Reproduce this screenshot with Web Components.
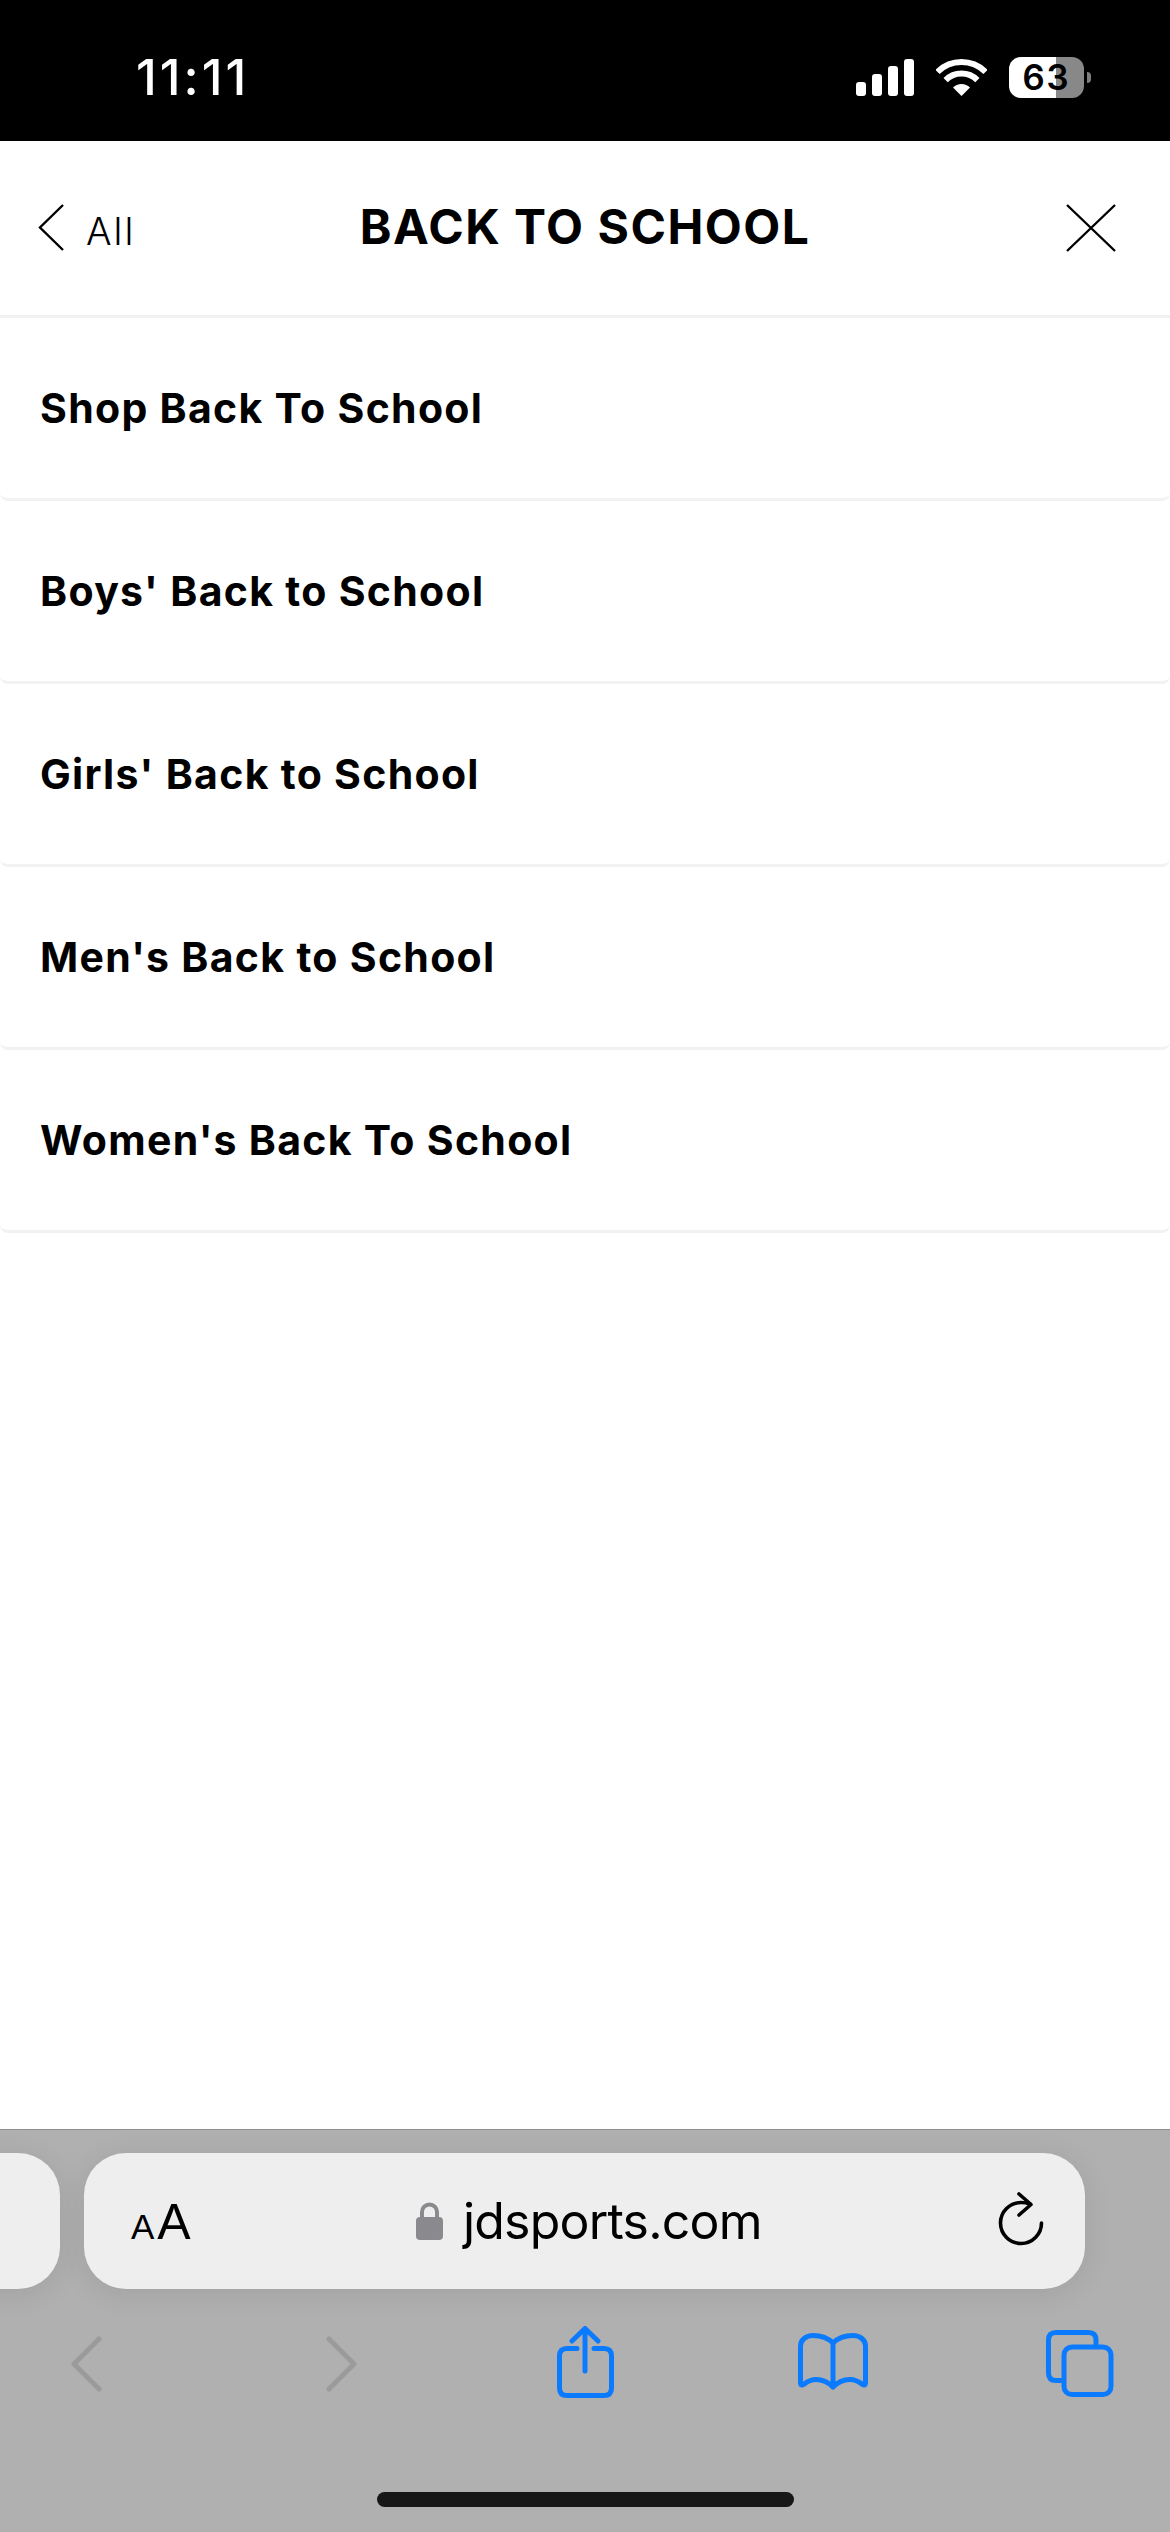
<!DOCTYPE html>
<html lang="en">
<head>
<meta charset="utf-8">
<title>Back to School</title>
<style>
  html, body { margin: 0; padding: 0; background: #fff; }
  body { width: 1170px; height: 2532px; overflow: hidden; font-family: Inter, "Liberation Sans", sans-serif; }
</style>
</head>
<body>
<phone-shell>
  <status-bar slot="top" time="11:11" level="63"></status-bar>
  <menu-header slot="top" heading="BACK TO SCHOOL" back="All"></menu-header>
  <menu-row>Shop Back To School</menu-row>
  <menu-row>Boys' Back to School</menu-row>
  <menu-row>Girls' Back to School</menu-row>
  <menu-row>Men's Back to School</menu-row>
  <menu-row>Women's Back To School</menu-row>
  <browser-bar slot="bottom" url="jdsports.com"></browser-bar>
</phone-shell>

<script>
/**
 * Outer frame, top bars / scrolling list / bottom bar
 */
class phoneshell extends HTMLElement {
  constructor () {
    super()
    this.attachShadow({ mode: 'open' })
    this.shadowRoot.innerHTML = `
    <style>
      :host { display: flex; flex-direction: column; width: 1170px; height: 2532px; background: #fff; }
      main { flex: 1; display: flex; flex-direction: column; }
    </style>
    <slot name="top"></slot>
    <main><slot></slot></main>
    <slot name="bottom"></slot>`
  }
}

class statusbar extends HTMLElement {
  constructor () {
    super()
    this.attachShadow({ mode: 'open' })
    this.shadowRoot.innerHTML = `
    <style>
      :host { display: flex; align-items: flex-start; height: 141px; background: #000; color: #fff; box-sizing: border-box; padding: 57px 0 0 136px; }
      #time { font: 500 50px/41px Inter, sans-serif; width: 720px; letter-spacing: 3px; }
      #signal { display: block; width: 58px; height: 37px; margin: 2px 22px 0 0; }
      #wifi { display: block; width: 51px; height: 37px; margin: 2px 22px 0 0; }
      #battery {
        width: 75px; height: 41px; border-radius: 12px; color: #000;
        background: linear-gradient(90deg, #fff 0 47px, #888 47px);
        font: 600 35px/41px Inter, sans-serif; font-variant-numeric: tabular-nums; text-align: center; letter-spacing: 1.5px;
      }
      #nub { width: 4px; height: 11px; margin: 15px 0 0 3px; background: #7f7f7f; border-radius: 0 6px 6px 0; }
    </style>
    <div id="time"></div>
    <svg id="signal" viewBox="0 0 58 37" fill="#fff">
      <rect x="0" y="23" width="10" height="14" rx="3"/>
      <rect x="16" y="15" width="10" height="22" rx="3"/>
      <rect x="32" y="7" width="10" height="30" rx="3"/>
      <rect x="48" y="0" width="10" height="37" rx="3"/>
    </svg>
    <svg id="wifi" viewBox="0 0 51 37">
      <path d="M1.5 13 A34 34 0 0 1 49.5 13" fill="none" stroke="#fff" stroke-width="6"/>
      <path d="M9.6 21.1 A22.5 22.5 0 0 1 41.4 21.1" fill="none" stroke="#fff" stroke-width="6"/>
      <path d="M25.5 37 L17 28.5 A12 12 0 0 1 34 28.5 Z" fill="#fff"/>
    </svg>
    <div id="battery"></div>
    <div id="nub"></div>`
  }

  connectedCallback () {
    this.shadowRoot.querySelector('#time').textContent = this.getAttribute('time')
    this.shadowRoot.querySelector('#battery').textContent = this.getAttribute('level')
  }
}

class menuheader extends HTMLElement {
  constructor () {
    super()
    this.attachShadow({ mode: 'open' })
    this.shadowRoot.innerHTML = `
    <style>
      :host { display: grid; grid-template-columns: 1fr auto 1fr; align-items: center; height: 174px; box-sizing: content-box; border-bottom: 3px solid #f1f1f1; color: #000; }
      #left { display: flex; align-items: center; padding-left: 38px; }
      #left svg { display: block; width: 26px; height: 47px; margin-top: -2px; }
      #back { font: 300 38px/1 Inter, sans-serif; letter-spacing: 2px; margin-left: 22px; margin-top: 6px; }
      h1 { margin: -2px 0 0; font: 700 48px/1 Inter, sans-serif; letter-spacing: 1.5px; }
      #right { display: flex; justify-content: flex-end; padding-right: 54px; }
      #right svg { display: block; width: 50px; height: 48px; }
    </style>
    <div id="left">
      <svg viewBox="0 0 26 47" fill="none" stroke="#000" stroke-width="2.4"><path d="M25 1 L2 23.5 L25 46"/></svg>
      <span id="back"></span>
    </div>
    <h1></h1>
    <div id="right">
      <svg viewBox="0 0 50 48" fill="none" stroke="#000" stroke-width="2.4"><path d="M1 1 L49 47 M49 1 L1 47"/></svg>
    </div>`
  }

  connectedCallback () {
    this.shadowRoot.querySelector('h1').textContent = this.getAttribute('heading')
    this.shadowRoot.querySelector('#back').textContent = this.getAttribute('back')
  }
}

class menurow extends HTMLElement {
  constructor () {
    super()
    this.attachShadow({ mode: 'open' })
    this.shadowRoot.innerHTML = `
    <style>
      :host { display: flex; align-items: center; height: 180px; padding-left: 40px; border-bottom: 3px solid #f2f2f2; border-radius: 0 0 8px 8px; font: 700 41px/1 Inter, sans-serif; letter-spacing: 1.3px; color: #000; }
    </style>
    <slot></slot>`
  }
}

class browserbar extends HTMLElement {
  constructor () {
    super()
    this.attachShadow({ mode: 'open' })
    this.shadowRoot.innerHTML = `
    <style>
      :host { display: block; height: 403px; box-sizing: border-box; background: #b0b0b0; border-top: 1px solid #8f8f8f; overflow: hidden; }
      #pills { display: flex; gap: 24px; margin: 23px 0 0 -200px; }
      .pill { height: 136px; border-radius: 42px; background: #eee; box-shadow: 0 4px 30px rgba(0,0,0,.09); }
      #prev { width: 260px; flex: none; }
      #url { width: 1001px; flex: none; display: flex; align-items: center; box-sizing: border-box; padding-left: 47px; color: #000; }
      #aa { display: flex; align-items: baseline; font-family: "Liberation Sans", sans-serif; width: 285px; margin-top: 2px; }
      #aa span:first-child { font-size: 35px; }
      #aa span:last-child { font-size: 50px; margin-left: 3px; }
      #lock { display: block; width: 27px; height: 38px; margin-right: 20px; }
      #site { font: 400 50px/1 Inter, sans-serif; width: 535px; letter-spacing: -.8px; }
      #reload { display: block; width: 46px; height: 54px; margin-top: -4px; }
      #tools { display: flex; align-items: flex-start; height: 72px; margin-top: 37px; padding-left: 71px; }
      #tools svg { display: block; flex: none; fill: none; stroke-width: 5; stroke-linecap: round; stroke-linejoin: round; }
      .off { stroke: #9b9b9b; }
      .on { stroke: #0a7aff; }
      #home { width: 417px; height: 15px; margin: 94px auto 0; border-radius: 8px; background: #171717; }
    </style>
    <div id="pills">
      <div class="pill" id="prev"></div>
      <div class="pill" id="url">
        <div id="aa"><span>A</span><span>A</span></div>
        <svg id="lock" viewBox="0 0 27 38">
          <path d="M6 17 V10 A7.5 7.5 0 0 1 21 10 V17" fill="none" stroke="#8a8a8e" stroke-width="4"/>
          <rect x="0" y="15" width="27" height="23" rx="4" fill="#8a8a8e"/>
        </svg>
        <span id="site"></span>
        <svg id="reload" viewBox="0 0 46 54" fill="none" stroke="#000" stroke-width="3.6" stroke-linecap="round" stroke-linejoin="round">
          <path d="M32 12 C29 11 26 10.5 23 10.5 A20.5 20.5 0 1 0 43.5 31"/>
          <path d="M21 2 L33 12.5 L21 23"/>
        </svg>
      </div>
    </div>
    <div id="tools">
      <svg class="off" width="31" height="56" viewBox="0 0 31 56" style="margin-top:10px"><path d="M28 3 L3 28 L28 53"/></svg>
      <svg class="off" width="31" height="56" viewBox="0 0 31 56" style="margin-top:10px;margin-left:224px"><path d="M3 3 L28 28 L3 53"/></svg>
      <svg class="on" width="60" height="72" viewBox="0 0 60 72" style="margin-left:200px;margin-top:0">
        <path d="M20 22.5 H10 Q2.5 22.5 2.5 30 V62 Q2.5 69.5 10 69.5 H47 Q54.5 69.5 54.5 62 V30 Q54.5 22.5 47 22.5 H37"/>
        <path d="M28 45 V3 M15 15 L28 2.5 L41 15"/>
      </svg>
      <svg class="on" width="70" height="60" viewBox="0 0 70 60" style="margin-left:181px;margin-top:7px">
        <path d="M35 10 C30 5 22 2.5 15 2.5 C8 2.5 2.5 7 2.5 13 V50 C2.5 52 4 52.5 5.5 51.5 C10 48 14 46.5 18 46.5 C24 46.5 30 49 35 54 C40 49 46 46.5 52 46.5 C56 46.5 60 48 64.5 51.5 C66 52.5 67.5 52 67.5 50 V13 C67.5 7 62 2.5 55 2.5 C48 2.5 40 5 35 10 Z M35 10 V54"/>
      </svg>
      <svg class="on" width="68" height="67" viewBox="0 0 68 67" style="margin-left:178px;margin-top:4px">
        <path d="M50 14 V10 Q50 2.5 42.5 2.5 H10 Q2.5 2.5 2.5 10 V43 Q2.5 50.5 10 50.5 H15"/>
        <rect x="18" y="17" width="47" height="47.5" rx="8"/>
      </svg>
    </div>
    <div id="home"></div>`
  }

  connectedCallback () {
    this.shadowRoot.querySelector('#site').textContent = this.getAttribute('url')
  }
}

window.customElements.define('phone-shell', phoneshell)
window.customElements.define('status-bar', statusbar)
window.customElements.define('menu-header', menuheader)
window.customElements.define('menu-row', menurow)
window.customElements.define('browser-bar', browserbar)
</script>
</body>
</html>
